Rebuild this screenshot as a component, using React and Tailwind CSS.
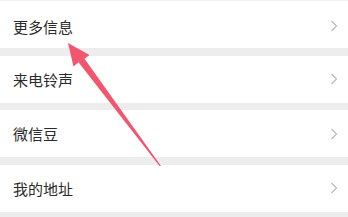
import React from "react";

const items = ["更多信息", "来电铃声", "微信豆", "我的地址"];

function Chevron() {
  return (
    <svg width="8" height="12" viewBox="0 0 8 12" className="shrink-0">
      <path d="M1.5 1 L6.5 6 L1.5 11" fill="none" stroke="#b8b8b8" strokeWidth="1.2" />
    </svg>
  );
}

export default function App() {
  return (
    <div
      className="relative w-[348px] h-[217px] overflow-hidden bg-[#ededed]"
      style={{ fontFamily: '"Noto Sans CJK SC", "Noto Sans", sans-serif' }}
    >
      <div className="flex flex-col gap-[7.5px]">
        {items.map((t, i) => (
          <div
            key={t}
            className={
              "flex items-center justify-between bg-white pl-[13px] pr-[10px] " +
              (i === 0 ? "h-[48px] pt-[3px] border-t border-[#f2f2f2]" : "h-[47px]")
            }
          >
            <span className="text-[15px] text-[#2b2b2b] leading-none">{t}</span>
            <Chevron />
          </div>
        ))}
      </div>
      <svg className="absolute left-0 top-0 pointer-events-none" width="348" height="217">
        <polygon
          points="68,43 89.5,55 84.5,58.7 161,166 159.5,166 78.5,62.3 73.5,66.5"
          fill="#f2566e"
        />
      </svg>
    </div>
  );
}
